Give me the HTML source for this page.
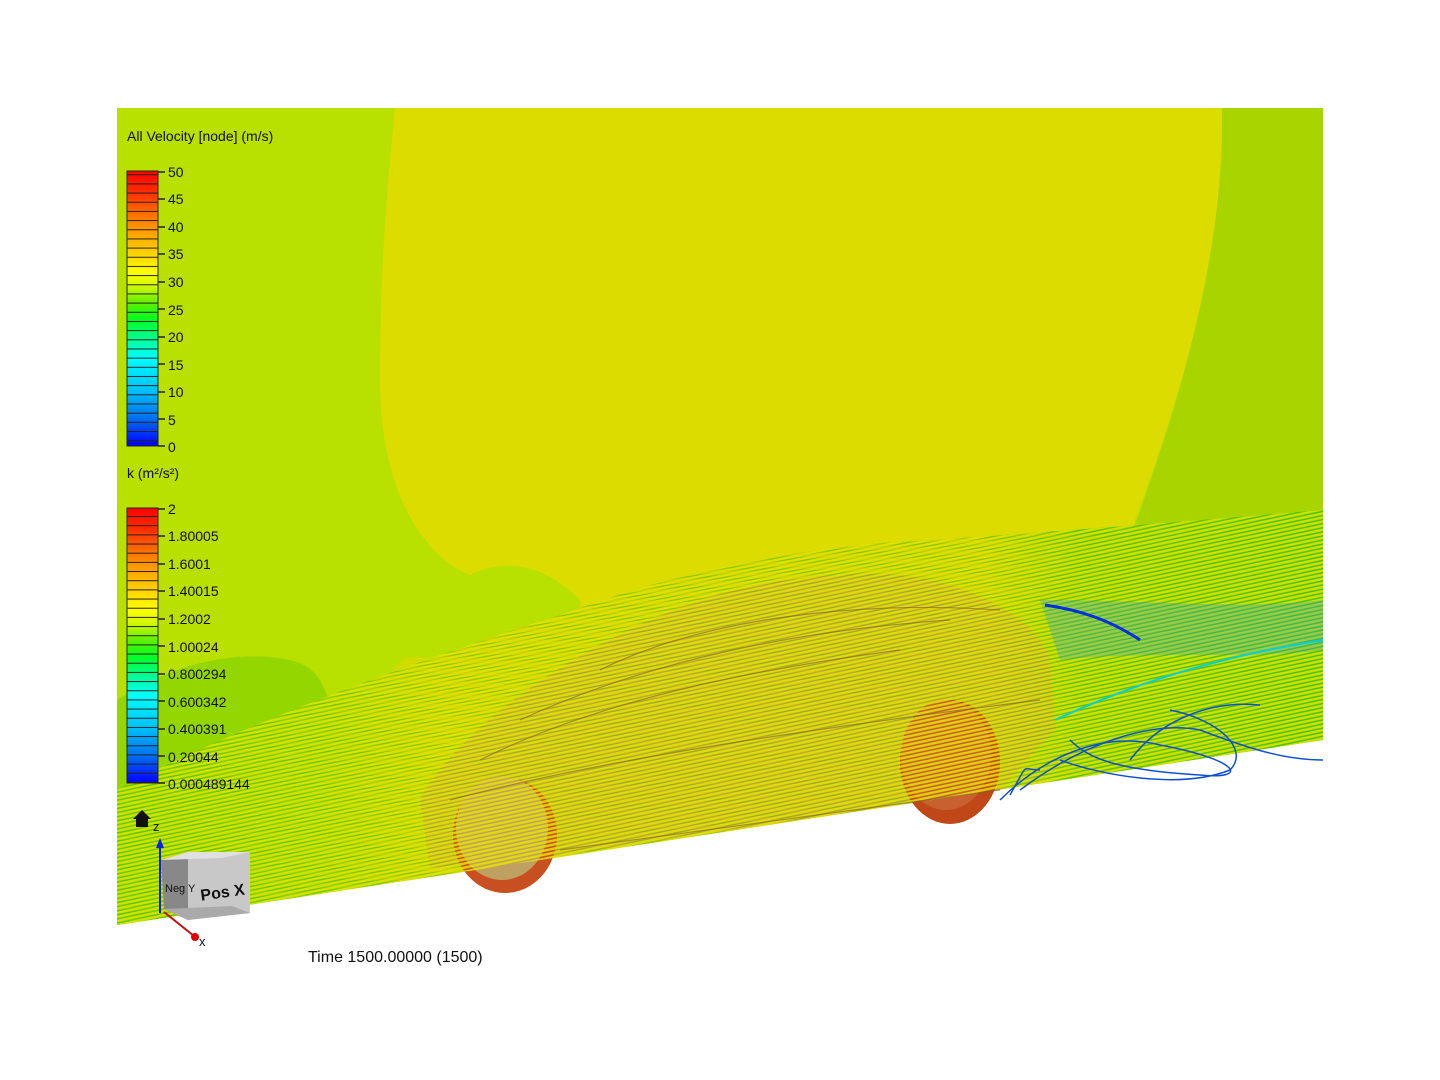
<!DOCTYPE html>
<html><head><meta charset="utf-8"><style>
html,body{margin:0;padding:0;background:#fff;width:1440px;height:1080px;overflow:hidden}
svg{display:block}
text{font-family:"Liberation Sans",sans-serif;fill:#111}
</style></head><body>
<svg width="1440" height="1080" viewBox="0 0 1440 1080" xmlns="http://www.w3.org/2000/svg">
<defs>
<clipPath id="dom"><polygon points="117,108 1323,108 1323,740 117,925"/></clipPath>
<linearGradient id="lg" x1="0" y1="0" x2="0" y2="1">
<stop offset="0" stop-color="#ff0000"/><stop offset="0.08" stop-color="#ff3000"/>
<stop offset="0.17" stop-color="#ff7a00"/><stop offset="0.27" stop-color="#ffc000"/>
<stop offset="0.37" stop-color="#ffff00"/><stop offset="0.42" stop-color="#d0f800"/>
<stop offset="0.48" stop-color="#60f000"/><stop offset="0.54" stop-color="#00ff20"/>
<stop offset="0.62" stop-color="#00ffa0"/><stop offset="0.68" stop-color="#00ffff"/>
<stop offset="0.8" stop-color="#00c0f8"/><stop offset="0.9" stop-color="#0070f0"/>
<stop offset="1" stop-color="#0000ff"/></linearGradient>
<pattern id="bl" patternUnits="userSpaceOnUse" width="40" height="9.17" y="0">
<rect x="0" y="0" width="40" height="1" fill="#222"/></pattern>
<pattern id="st" patternUnits="userSpaceOnUse" width="60" height="4" patternTransform="rotate(-12)">
<rect width="60" height="2.4" fill="#e8e400" opacity="0.85"/></pattern>
<pattern id="st2" patternUnits="userSpaceOnUse" width="60" height="3" patternTransform="rotate(-8)">
<rect width="60" height="1.4" fill="#40c000" opacity="0.5"/></pattern>
<linearGradient id="band" x1="0" y1="0" x2="1" y2="0">
<stop offset="0" stop-color="#6cd000"/><stop offset="0.17" stop-color="#90d400"/>
<stop offset="0.27" stop-color="#d0d400"/><stop offset="0.72" stop-color="#c8d000"/>
<stop offset="0.8" stop-color="#70c800"/><stop offset="1" stop-color="#50c810"/></linearGradient>
</defs>
<g clip-path="url(#dom)">
<rect x="117" y="108" width="1206" height="820" fill="#b8e000"/>
<path d="M395,108 L1222,108 C1225,250 1180,400 1135,520 L1135,740 L600,820 L580,600 C540,560 500,560 470,575 C430,560 380,500 380,380 C380,250 390,160 395,108 Z" fill="#dcdc00"/>
<path d="M1222,108 L1323,108 L1323,510 L1135,525 C1180,400 1225,250 1222,108 Z" fill="#a8d400"/>
<path d="M117,700 C180,660 240,650 290,660 C330,670 320,700 340,710 L340,930 L117,930 Z" fill="#94d600"/>
<path d="M380,700 C390,660 410,650 430,660 L450,700 L440,880 L380,880Z" fill="#d0dc00"/>
<!-- streamline band -->
<path d="M117,790 C250,720 420,660 560,615 C680,570 800,548 900,542 C1060,532 1200,520 1323,510 L1323,760 L117,930 Z" fill="url(#band)"/>
<path d="M117,790 C250,720 420,660 560,615 C680,570 800,548 900,542 C1060,532 1200,520 1323,510 L1323,760 L117,930 Z" fill="url(#st2)"/>
</g>
<!-- car body -->
<path d="M420,800 C450,740 560,650 700,600 C780,575 850,572 900,575 C970,582 1040,620 1050,660 L1055,730 L1000,790 L560,855 L430,868 Z" fill="#b89050" opacity="0.55"/>
<ellipse cx="505" cy="835" rx="52" ry="58" fill="#c85020"/>
<ellipse cx="502" cy="828" rx="46" ry="52" fill="#c0a060"/>
<ellipse cx="950" cy="762" rx="50" ry="62" fill="#c04818"/>
<ellipse cx="946" cy="755" rx="45" ry="55" fill="#c86030"/>
<g clip-path="url(#dom)">
<path d="M117,790 C250,720 420,660 560,615 C680,570 800,548 900,542 C1060,532 1200,520 1323,510 L1323,760 L117,930 Z" fill="url(#st)"/>
</g>
<g stroke="#806030" stroke-width="1.2" fill="none" opacity="0.6">
<path d="M480,760 C600,700 750,670 900,650"/><path d="M520,720 C650,660 800,630 950,620"/>
<path d="M600,670 C700,620 850,600 1000,610"/><path d="M450,800 C600,760 800,730 1040,700"/>
<path d="M560,850 C700,830 850,810 1000,790"/>
</g>
<!-- wake colours -->
<path d="M1040,600 C1150,600 1250,610 1323,600 L1323,650 C1250,660 1150,650 1060,660Z" fill="#20a0e0" opacity="0.3"/>
<path d="M1045,605 C1080,610 1110,620 1140,640" stroke="#0030e0" stroke-width="3" fill="none"/>
<path d="M1055,720 C1120,690 1200,660 1323,640" stroke="#00d0e0" stroke-width="2" fill="none"/>
<g stroke="#1050d0" stroke-width="1.5" fill="none">
<path d="M1000,800 C1040,760 1100,730 1160,745 C1240,760 1250,780 1200,775 C1120,770 1090,760 1070,740"/>
<path d="M1060,760 C1100,775 1180,790 1230,770 C1250,750 1220,720 1170,710"/>
<path d="M1020,790 C1080,745 1150,720 1200,730 C1240,745 1280,760 1323,760"/>
<path d="M1130,760 C1160,720 1210,700 1260,705"/>
<path d="M1010,795 C1030,760 1020,770 1040,770"/>
</g>
<!-- legend 1 -->
<text x="127" y="141" font-size="14">All Velocity [node] (m/s)</text>
<rect x="127" y="171" width="31" height="275" fill="url(#lg)"/>
<rect x="127" y="171" width="31" height="276" fill="url(#bl)"/>
<rect x="127" y="171" width="31" height="275" fill="none" stroke="#222" stroke-width="1"/>
<g font-size="14">
<text x="168" y="177">50</text><text x="168" y="204">45</text><text x="168" y="232">40</text>
<text x="168" y="259">35</text><text x="168" y="287">30</text><text x="168" y="315">25</text>
<text x="168" y="342">20</text><text x="168" y="370">15</text><text x="168" y="397">10</text>
<text x="168" y="425">5</text><text x="168" y="452">0</text>
</g>
<g stroke="#222" stroke-width="1.5">
<line x1="158" y1="172" x2="165" y2="172"/><line x1="158" y1="199" x2="165" y2="199"/><line x1="158" y1="227" x2="165" y2="227"/><line x1="158" y1="254" x2="165" y2="254"/><line x1="158" y1="282" x2="165" y2="282"/><line x1="158" y1="309" x2="165" y2="309"/><line x1="158" y1="337" x2="165" y2="337"/><line x1="158" y1="364" x2="165" y2="364"/><line x1="158" y1="392" x2="165" y2="392"/><line x1="158" y1="419" x2="165" y2="419"/><line x1="158" y1="446" x2="165" y2="446"/>
</g>
<!-- legend 2 -->
<text x="127" y="478" font-size="14">k (m²/s²)</text>
<rect x="127" y="508" width="31" height="275" fill="url(#lg)"/>
<rect x="127" y="508" width="31" height="276" fill="url(#bl)" transform="translate(0,2.5)"/>
<rect x="127" y="508" width="31" height="275" fill="none" stroke="#222" stroke-width="1"/>
<g font-size="14">
<text x="168" y="514">2</text><text x="168" y="541">1.80005</text><text x="168" y="569">1.6001</text>
<text x="168" y="596">1.40015</text><text x="168" y="624">1.2002</text><text x="168" y="652">1.00024</text>
<text x="168" y="679">0.800294</text><text x="168" y="707">0.600342</text><text x="168" y="734">0.400391</text>
<text x="168" y="762">0.20044</text><text x="168" y="789">0.000489144</text>
</g>
<g stroke="#222" stroke-width="1.5">
<line x1="158" y1="509" x2="165" y2="509"/><line x1="158" y1="536" x2="165" y2="536"/><line x1="158" y1="564" x2="165" y2="564"/><line x1="158" y1="591" x2="165" y2="591"/><line x1="158" y1="619" x2="165" y2="619"/><line x1="158" y1="646" x2="165" y2="646"/><line x1="158" y1="674" x2="165" y2="674"/><line x1="158" y1="701" x2="165" y2="701"/><line x1="158" y1="729" x2="165" y2="729"/><line x1="158" y1="756" x2="165" y2="756"/><line x1="158" y1="783" x2="165" y2="783"/>
</g>
<!-- triad / cube -->
<path d="M133,819 L142,810 L151,819 L148,819 L148,827 L136,827 L136,819Z" fill="#111"/>
<text x="153" y="831" font-size="13">z</text>
<line x1="160" y1="845" x2="160" y2="913" stroke="#1020e0" stroke-width="2"/>
<path d="M156,848 L160,838 L164,848Z" fill="#1020e0"/>
<line x1="164" y1="912" x2="194" y2="936" stroke="#c01010" stroke-width="2"/>
<polygon points="161,860 188,852 188,920 164,909" fill="#888"/>
<polygon points="188,852 250,852 250,913 188,920" fill="#c8c8c8"/>
<polygon points="161,860 188,852 250,852 222,858" fill="#e0e0e0"/>
<polygon points="164,909 188,920 250,913 232,906" fill="#aaa"/>
<text x="200" y="898" font-size="16" font-weight="bold" fill="#222" transform="rotate(-8 220 890)">Pos X</text>
<text x="165" y="892" font-size="11" fill="#333">Neg Y</text>
<circle cx="195" cy="937" r="4" fill="#e00000"/>
<text x="199" y="946" font-size="13">x</text>
<text x="308" y="962" font-size="16">Time 1500.00000 (1500)</text>
</svg>
</body></html>
